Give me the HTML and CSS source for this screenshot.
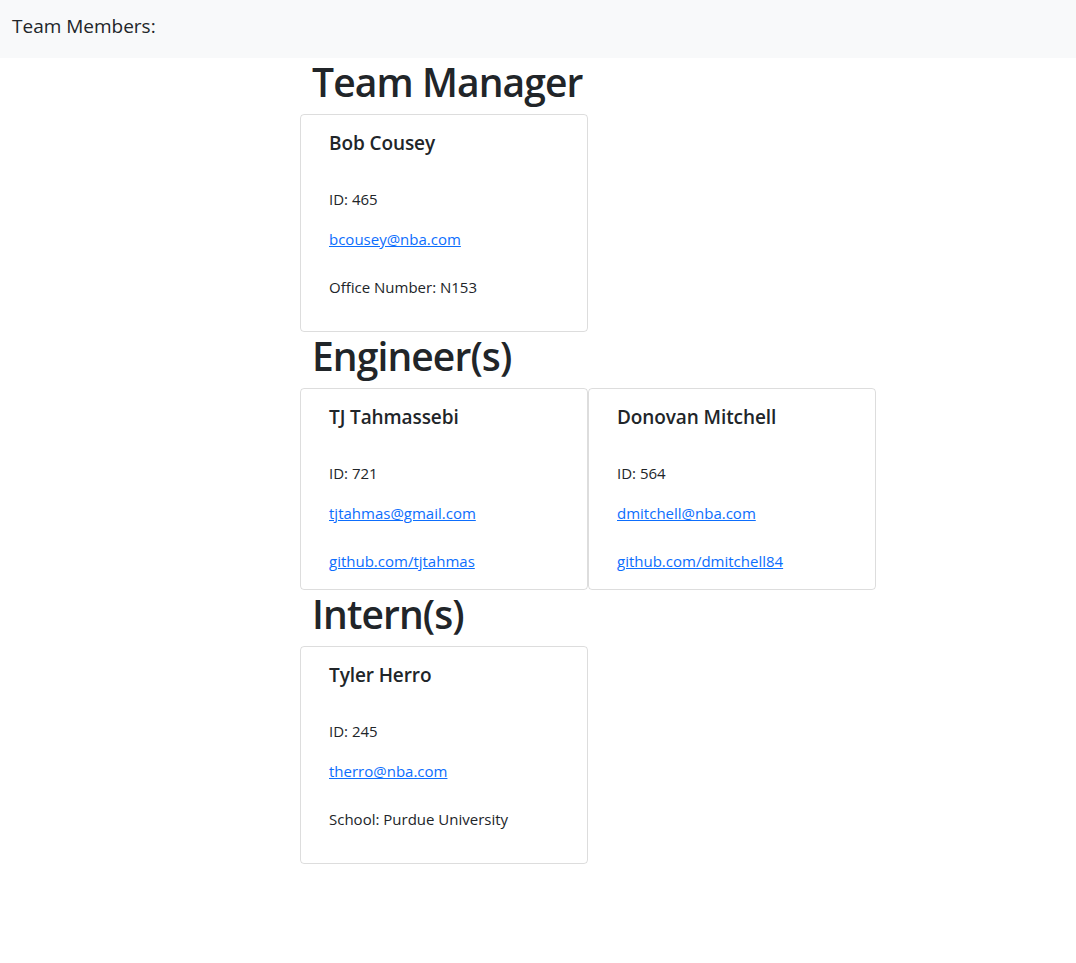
FILE: index.html
```html
<!DOCTYPE html>
<html lang="en">
<head>
<meta charset="utf-8">
<title>Team Profile</title>
<link rel="stylesheet" href="styles.css">
</head>
<body>
<nav class="navbar">
  <span class="brand">Team Members:</span>
</nav>
<main class="content">
  <section class="group">
    <h1 class="group-title">Team Manager</h1>
    <div class="cards">
      <div class="card">
        <h5 class="card-name">Bob Cousey</h5>
        <p class="line first">ID: 465</p>
        <p class="line email"><a href="#">bcousey@nba.com</a></p>
        <p class="line last">Office Number: N153</p>
      </div>
    </div>
  </section>
  <section class="group">
    <h1 class="group-title">Engineer(s)</h1>
    <div class="cards">
      <div class="card">
        <h5 class="card-name">TJ Tahmassebi</h5>
        <p class="line first">ID: 721</p>
        <p class="line email"><a href="#">tjtahmas@gmail.com</a></p>
        <p class="line final"><a href="#">github.com/tjtahmas</a></p>
      </div>
      <div class="card">
        <h5 class="card-name">Donovan Mitchell</h5>
        <p class="line first">ID: 564</p>
        <p class="line email"><a href="#">dmitchell@nba.com</a></p>
        <p class="line final"><a href="#">github.com/dmitchell84</a></p>
      </div>
    </div>
  </section>
  <section class="group">
    <h1 class="group-title">Intern(s)</h1>
    <div class="cards">
      <div class="card">
        <h5 class="card-name">Tyler Herro</h5>
        <p class="line first">ID: 245</p>
        <p class="line email"><a href="#">therro@nba.com</a></p>
        <p class="line last">School: Purdue University</p>
      </div>
    </div>
  </section>
</main>
</body>
</html>
```
FILE: styles.css
```css
* { box-sizing: border-box; }
body {
  margin: 0;
  font-family: "Open Sans", "Noto Sans", sans-serif;
  color: #212529;
  font-size: 15px;
  line-height: 1.5;
  background: #fff;
}
.navbar {
  height: 58px;
  background: #f8f9fa;
  padding: 11px 12px 0;
}
.brand {
  display: block;
  font-size: 19px;
  line-height: 30px;
  font-weight: 400;
}
.content {
  margin-left: 300px;
  width: 576px;
}
.group-title {
  margin: 0 0 8px;
  padding-left: 12px;
  font-size: 39px;
  line-height: 48px;
  font-weight: 600;
  letter-spacing: -0.9px;
}
.cards {
  display: flex;
}
.card {
  width: 288px;
  border: 1px solid rgba(0,0,0,.135);
  border-radius: 4px;
  padding: 16px 28px;
}
.card-name {
  margin: 0;
  font-size: 19px;
  line-height: 24px;
  font-weight: 600;
  letter-spacing: -0.1px;
}
.line {
  margin: 0;
  font-size: 15px;
  line-height: 24px;
}
.line.first { margin-top: 32px; }
.line.email { margin-top: 16px; }
.line.last, .line.final { margin-top: 24px; }
.line.last { margin-bottom: 16px; }
a { color: #0d6efd; text-decoration: underline; }
```
